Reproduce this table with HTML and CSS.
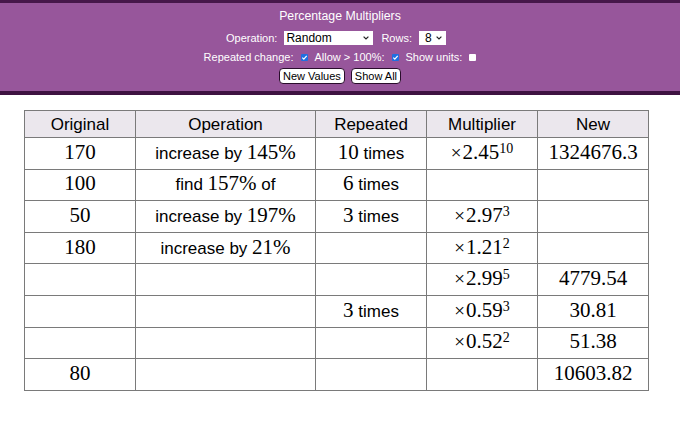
FILE: index.html
```html
<!DOCTYPE html>
<html>
<head>
<meta charset="utf-8">
<link rel="stylesheet" href="styles.css">
</head>
<body>
<header class="top">
  <div class="title">Percentage Multipliers</div>
  <div class="line line-sel">
    <span class="lbl">Operation:</span>
    <span class="sel sel-op"><span class="sel-text">Random</span><svg class="chev" width="6" height="4" viewBox="0 0 6 4"><path d="M0.6 0.6 L3 3 L5.4 0.6" fill="none" stroke="#222" stroke-width="1.2"/></svg></span>
    <span class="lbl">Rows:</span>
    <span class="sel sel-rows"><span class="sel-text">8</span><svg class="chev" width="6" height="4" viewBox="0 0 6 4"><path d="M0.6 0.6 L3 3 L5.4 0.6" fill="none" stroke="#222" stroke-width="1.2"/></svg></span>
  </div>
  <div class="line line-check">
    <span class="lbl">Repeated change:</span>
    <span class="cb cb-on"><svg width="7" height="7" viewBox="0 0 7 7"><path d="M1.3 3.6 L2.8 5.1 L5.7 1.8" fill="none" stroke="#fff" stroke-width="1.2"/></svg></span>
    <span class="lbl">Allow &gt; 100%:</span>
    <span class="cb cb-on"><svg width="7" height="7" viewBox="0 0 7 7"><path d="M1.3 3.6 L2.8 5.1 L5.7 1.8" fill="none" stroke="#fff" stroke-width="1.2"/></svg></span>
    <span class="lbl">Show units:</span>
    <span class="cb cb-off"></span>
  </div>
  <div class="line line-btn">
    <button class="btn">New Values</button>
    <button class="btn">Show All</button>
  </div>
</header>
<main class="content">
  <table class="grid">
    <colgroup>
      <col class="c-narrow"><col class="c-wide"><col class="c-narrow"><col class="c-narrow"><col class="c-narrow">
    </colgroup>
    <thead>
      <tr><th>Original</th><th>Operation</th><th>Repeated</th><th>Multiplier</th><th>New</th></tr>
    </thead>
    <tbody>
      <tr><td class="m">170</td><td>increase by <span class="m">145%</span></td><td><span class="m">10</span> times</td><td class="m"><span class="x">×</span>2.45<sup>10</sup></td><td class="m">1324676.3</td></tr>
      <tr><td class="m">100</td><td>find <span class="m">157%</span> of</td><td><span class="m">6</span> times</td><td></td><td></td></tr>
      <tr><td class="m">50</td><td>increase by <span class="m">197%</span></td><td><span class="m">3</span> times</td><td class="m"><span class="x">×</span>2.97<sup>3</sup></td><td></td></tr>
      <tr><td class="m">180</td><td>increase by <span class="m">21%</span></td><td></td><td class="m"><span class="x">×</span>1.21<sup>2</sup></td><td></td></tr>
      <tr><td></td><td></td><td></td><td class="m"><span class="x">×</span>2.99<sup>5</sup></td><td class="m">4779.54</td></tr>
      <tr><td></td><td></td><td><span class="m">3</span> times</td><td class="m"><span class="x">×</span>0.59<sup>3</sup></td><td class="m">30.81</td></tr>
      <tr><td></td><td></td><td></td><td class="m"><span class="x">×</span>0.52<sup>2</sup></td><td class="m">51.38</td></tr>
      <tr><td class="m">80</td><td></td><td></td><td></td><td class="m">10603.82</td></tr>
    </tbody>
  </table>
</main>
</body>
</html>
```
FILE: styles.css
```css
html, body {
  margin: 0;
  padding: 0;
  background: #ffffff;
}
body {
  font-family: "Liberation Sans", Arial, sans-serif;
  color: #000;
}
.top {
  background: #97569b;
  border-top: 3px solid #46174a;
  border-bottom: 4px solid #3e1241;
  height: 88px;
  box-sizing: content-box;
  display: flex;
  flex-direction: column;
  align-items: center;
  color: #ffffff;
}
.title {
  font-size: 12.3px;
  line-height: 14px;
  margin-top: 6px;
  height: 14px;
}
.line {
  display: flex;
  align-items: center;
  font-size: 11px;
  line-height: 13px;
}
.line-sel {
  margin-top: 8px;
  height: 14px;
}
.line-check {
  margin-top: 5px;
  height: 14px;
}
.line-btn {
  margin-top: 4px;
  height: 16px;
}
.lbl {
  margin-right: 7px;
}
.sel {
  display: flex;
  align-items: center;
  justify-content: space-between;
  height: 14px;
  background: #fff;
  color: #000;
  font-size: 12px;
  margin-right: 8px;
  box-sizing: border-box;
}
.sel-op {
  width: 89px;
  padding: 0 4px 0 2px;
}
.sel-rows {
  width: 27px;
  padding: 0 4px 0 6px;
}
.chev {
  display: block;
}
.cb {
  display: inline-flex;
  align-items: center;
  justify-content: center;
  width: 7px;
  height: 7px;
  margin-right: 7px;
  border-radius: 1px;
}
.cb-on {
  background: #1f6fe0;
}
.cb-off {
  background: #ffffff;
  margin-right: 0;
}
.btn {
  font-family: "Liberation Sans", Arial, sans-serif;
  font-size: 11px;
  line-height: 12px;
  height: 16px;
  padding: 0 3px;
  margin: 0 3px;
  background: #ffffff;
  color: #000;
  border: 1px solid #2a0d2c;
  border-radius: 4px;
}
.content {
  padding: 15px 0 0 24px;
}
.grid {
  border-collapse: collapse;
  table-layout: fixed;
  width: 625px;
}
.c-narrow { width: 111px; }
.c-wide { width: 180px; }
.grid th, .grid td {
  border: 1px solid #7a7a7a;
  text-align: center;
  padding: 0;
  line-height: 1;
}
.grid th {
  background: #ebe7ed;
  font-weight: normal;
  font-size: 17px;
  height: 26px;
}
.grid td {
  font-size: 17px;
  height: 28.6px;
  padding-bottom: 2px;
}
.grid .m {
  font-family: "Liberation Serif", "Times New Roman", serif;
  font-size: 21px;
}
.grid .x {
  font-size: 19px;
  margin-right: 1px;
}
.grid sup {
  font-size: 14px;
  vertical-align: 0.45em;
  line-height: 0;
}
```
